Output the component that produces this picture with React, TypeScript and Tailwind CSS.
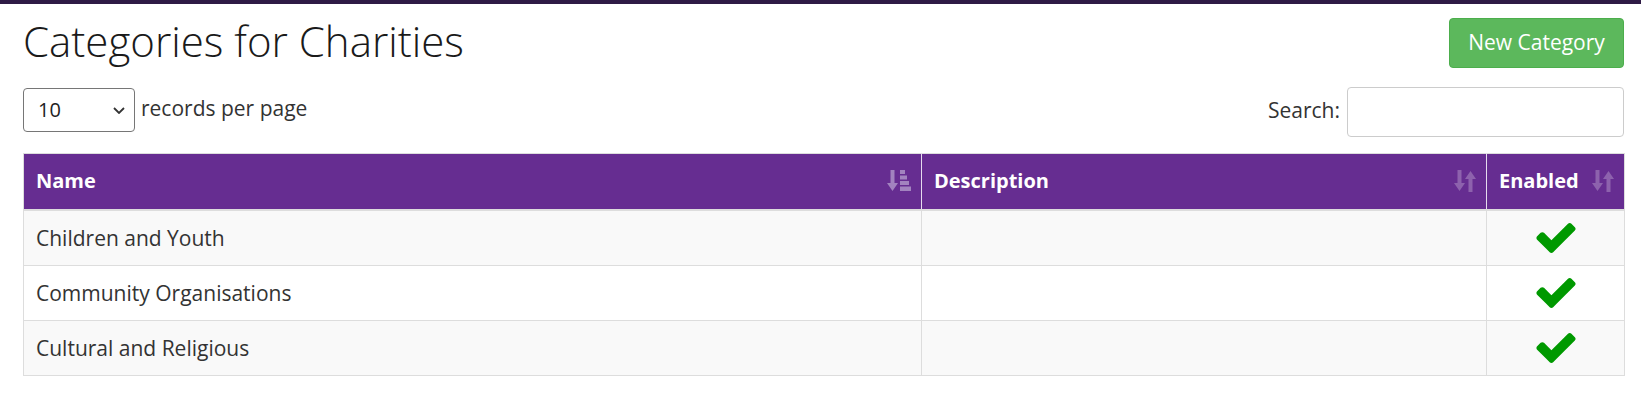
function SortAsc() {
  return (
    <svg width="24" height="22" viewBox="0 0 24 22" fill="#a283bf">
      <rect x="3.5" y="0" width="4" height="14" />
      <polygon points="0,13 11,13 5.5,21" />
      <rect x="13" y="0" width="5" height="4" />
      <rect x="13" y="5.5" width="7" height="4" />
      <rect x="13" y="11" width="9" height="4" />
      <rect x="13" y="16.5" width="11" height="4.5" />
    </svg>
  );
}

function SortBoth() {
  return (
    <svg width="22" height="22" viewBox="0 0 22 22" fill="#8d62ad">
      <rect x="3.5" y="0" width="4" height="14" />
      <polygon points="0,13 11,13 5.5,21" />
      <rect x="14.5" y="8" width="4" height="14" />
      <polygon points="11,9 22,9 16.5,1" />
    </svg>
  );
}

function Check() {
  return (
    <svg width="40" height="30" viewBox="121 334 1550 1188" fill="#009900">
      <path d="M1671 566q0 40-28 68l-724 724-136 136q-28 28-68 28t-68-28l-136-136-362-362q-28-28-28-68t28-68l136-136q28-28 68-28t68 28l294 295 656-657q28-28 68-28t68 28l136 136q28 28 28 68z" />
    </svg>
  );
}

const rows = [
  { name: "Children and Youth", desc: "" },
  { name: "Community Organisations", desc: "" },
  { name: "Cultural and Religious", desc: "" },
];

export default function App() {
  return (
    <div className="min-h-screen bg-white font-['Open_Sans',sans-serif] text-[#333]">
      <div className="h-[4px] bg-[#2e1a45]" />
      <div className="pl-[23px] pr-[17px]">
        <div className="flex items-start justify-between pt-[14px]">
          <h1 className="text-[42px] font-light leading-[46px] text-[#1a1a1a]">
            Categories for Charities
          </h1>
          <button className="h-[50px] w-[175px] rounded-[4px] border border-[#4cae4c] bg-[#5cb85c] text-[21px] text-white">
            New Category
          </button>
        </div>

        <div className="mt-[19px] flex items-start justify-between">
          <div className="mt-[1px] flex items-start gap-[6px]">
            <div className="relative">
              <select className="h-[44px] w-[112px] appearance-none rounded-[4px] border border-[#767676] bg-white pl-[14px] text-[20px] text-[#222]">
                <option>10</option>
                <option>25</option>
                <option>50</option>
                <option>100</option>
              </select>
              <svg
                className="pointer-events-none absolute left-[90px] top-[19px]"
                width="12"
                height="7"
                viewBox="0 0 12 7"
                fill="none"
                stroke="#333"
                strokeWidth="1.8"
              >
                <polyline points="1,1 6,6 11,1" />
              </svg>
            </div>
            <span className="mt-[5px] text-[21px] leading-[30px]">records per page</span>
          </div>
          <div className="flex items-start gap-[7px]">
            <span className="mt-[8px] text-[21px] leading-[30px]">Search:</span>
            <input
              type="search"
              className="h-[50px] w-[277px] rounded-[4px] border border-[#ccc] bg-white px-3 text-[20px]"
            />
          </div>
        </div>

        <table className="mt-[16px] w-full table-fixed border-collapse border border-[#ddd]">
          <colgroup>
            <col className="w-[898px]" />
            <col className="w-[565px]" />
            <col className="w-[138px]" />
          </colgroup>
          <thead>
            <tr className="h-[56px] bg-[#662d91] text-white">
              <th className="border-b-2 border-r border-b-[#ddd] border-r-[#e6dcee] pl-[12px] pr-[10px] text-left text-[20px] font-bold">
                <div className="flex items-center justify-between">
                  <span>Name</span>
                  <SortAsc />
                </div>
              </th>
              <th className="border-b-2 border-r border-b-[#ddd] border-r-[#e6dcee] pl-[12px] pr-[10px] text-left text-[20px] font-bold">
                <div className="flex items-center justify-between">
                  <span>Description</span>
                  <SortBoth />
                </div>
              </th>
              <th className="border-b-2 border-b-[#ddd] pl-[12px] pr-[10px] text-left text-[20px] font-bold">
                <div className="flex items-center justify-between">
                  <span>Enabled</span>
                  <SortBoth />
                </div>
              </th>
            </tr>
          </thead>
          <tbody>
            {rows.map((r, i) => (
              <tr key={r.name} className={i % 2 === 0 ? "bg-[#f9f9f9]" : "bg-white"}>
                <td className="border-t border-r border-[#ddd] px-[12px] py-[12px] text-[21px] leading-[30px]">
                  {r.name}
                </td>
                <td className="border-t border-r border-[#ddd] px-[12px] py-[12px] text-[21px] leading-[30px]">
                  {r.desc}
                </td>
                <td className="border-t border-[#ddd] px-[12px] py-0">
                  <div className="flex justify-center">
                    <Check />
                  </div>
                </td>
              </tr>
            ))}
          </tbody>
        </table>
      </div>
    </div>
  );
}
